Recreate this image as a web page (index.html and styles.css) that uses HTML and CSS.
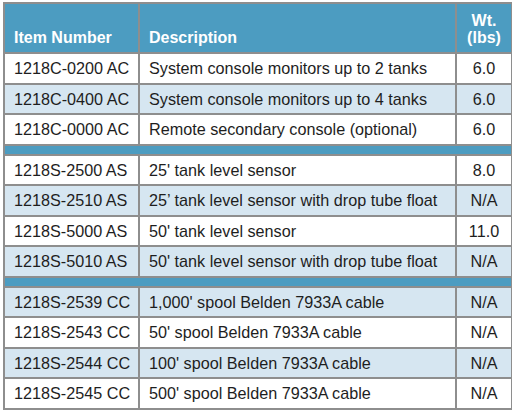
FILE: index.html
```html
<!DOCTYPE html>
<html>
<head>
<meta charset="utf-8">
<link rel="stylesheet" href="styles.css">
</head>
<body>
<table class="parts">
  <colgroup>
    <col class="c-item">
    <col class="c-desc">
    <col class="c-wt">
  </colgroup>
  <thead>
    <tr class="head">
      <th class="left">Item Number</th>
      <th class="left">Description</th>
      <th class="center">Wt.<br>(lbs)</th>
    </tr>
  </thead>
  <tbody>
    <tr><td>1218C-0200 AC</td><td>System console monitors up to 2 tanks</td><td class="center">6.0</td></tr>
    <tr class="alt"><td>1218C-0400 AC</td><td>System console monitors up to 4 tanks</td><td class="center">6.0</td></tr>
    <tr><td>1218C-0000 AC</td><td>Remote secondary console (optional)</td><td class="center">6.0</td></tr>
    <tr class="band"><td colspan="3"></td></tr>
    <tr><td>1218S-2500 AS</td><td>25' tank level sensor</td><td class="center">8.0</td></tr>
    <tr class="alt"><td>1218S-2510 AS</td><td>25’ tank level sensor with drop tube float</td><td class="center">N/A</td></tr>
    <tr><td>1218S-5000 AS</td><td>50' tank level sensor</td><td class="center">11.0</td></tr>
    <tr class="alt"><td>1218S-5010 AS</td><td>50' tank level sensor with drop tube float</td><td class="center">N/A</td></tr>
    <tr class="band"><td colspan="3"></td></tr>
    <tr class="alt"><td>1218S-2539 CC</td><td>1,000' spool Belden 7933A cable</td><td class="center">N/A</td></tr>
    <tr><td>1218S-2543 CC</td><td>50' spool Belden 7933A cable</td><td class="center">N/A</td></tr>
    <tr class="alt"><td>1218S-2544 CC</td><td>100' spool Belden 7933A cable</td><td class="center">N/A</td></tr>
    <tr><td>1218S-2545 CC</td><td>500' spool Belden 7933A cable</td><td class="center">N/A</td></tr>
  </tbody>
</table>
</body>
</html>
```
FILE: styles.css
```css
html, body {
  margin: 0;
  padding: 0;
  background: #ffffff;
}
body {
  padding: 2px 0 0 3px;
}
.parts {
  border-collapse: collapse;
  width: 508px;
  font-family: "Liberation Sans", Arial, sans-serif;
  font-size: 16.2px;
  color: #1e1e1e;
  table-layout: fixed;
}
.c-item { width: 135px; }
.c-desc { width: 317px; }
.c-wt { width: 56px; }
.parts th, .parts td {
  border: 2px solid #8e8e8e;
  padding: 0 0 0 9px;
  white-space: nowrap;
}
.parts td {
  height: 28.5px;
  line-height: 18px;
}
.head th {
  background: #4c9cc1;
  color: #ffffff;
  font-weight: bold;
  font-size: 16px;
  height: 42px;
  line-height: 17px;
  vertical-align: bottom;
  padding-bottom: 6px;
}
.left { text-align: left; }
.parts .center { text-align: center; padding-left: 0; }
.alt td { background: #d6e6f1; }
.band td {
  background: #4c9cc1;
  height: 8px;
  padding: 0;
}
```
